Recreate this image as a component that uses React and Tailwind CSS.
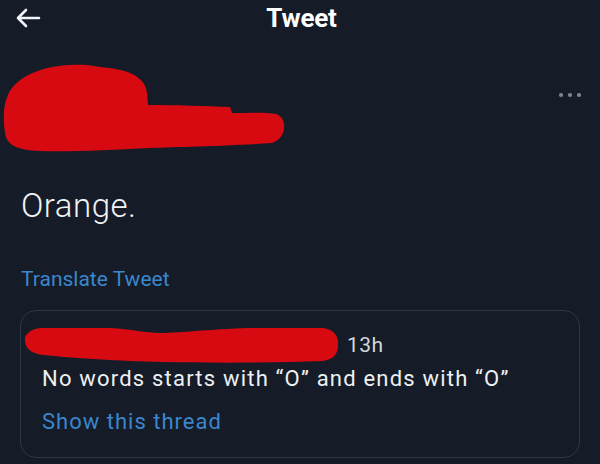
export default function App() {
  return (
    <div className="w-[600px] h-[464px] bg-[#151c28] overflow-hidden text-white" style={{ fontFamily: 'Roboto, "Liberation Sans", sans-serif' }}>
      <div className="relative h-[38px] flex items-start justify-center">
        <svg className="absolute left-[15px] top-[7px]" width="26" height="22" viewBox="0 0 26 22" fill="none" stroke="#f2f4f7" strokeWidth="2.6" strokeLinecap="round" strokeLinejoin="round">
          <path d="M24 11H3M11 3L3 11l8 8" />
        </svg>
        <span className="text-[26px] font-bold tracking-[-0.2px] leading-none mt-[5px] ml-[3px]">Tweet</span>
      </div>
      <div className="flex items-start justify-between h-[124px]">
        <svg width="290" height="100" viewBox="0 0 290 100" className="mt-[22px]">
          <path d="M100 7 C 125 9, 145 15, 147 33 L 148 45 C 175 45, 205 46, 230 47 L 232 53 C 250 53, 265 52, 276 54 C 288 58, 287 78, 272 83 C 230 86, 180 87, 150 88 C 110 90, 70 92, 40 91 C 15 90, 6 84, 5 72 C 3 60, 3 45, 8 35 C 15 18, 40 6, 70 5 C 85 4, 95 6, 100 7 Z" fill="#d70a12" />
        </svg>
        <svg width="26" height="6" viewBox="0 0 26 6" className="mt-[54px] mr-[17px]">
          <circle cx="4" cy="3" r="2.1" fill="#7d8691" />
          <circle cx="13" cy="3" r="2.1" fill="#7d8691" />
          <circle cx="22" cy="3" r="2.1" fill="#7d8691" />
        </svg>
      </div>
      <div className="px-[21px]">
        <div className="text-[33px] font-light leading-none tracking-[0.5px] text-[#f1f3f5] mt-[27px]">Orange.</div>
        <div className="text-[21px] leading-none text-[#3b86cc] mt-[47px]">Translate Tweet</div>
      </div>
      <div className="mx-[20px] mt-[20px] h-[148px] rounded-[16px] border border-[#2e3642] pt-[14px]">
        <div className="flex items-start">
          <svg width="320" height="40" viewBox="0 0 320 40">
            <path d="M4 12 C 8 5, 15 3, 22 3 L 89 3 C 110 4, 125 8, 139 8 C 160 8, 200 3, 239 3 L 302 3 C 314 5, 318 12, 317 20 C 317 28, 314 34, 302 36 C 250 38, 190 38, 140 37 C 100 36, 50 33, 22 30 C 10 28, 3 24, 4 12 Z" fill="#d70a12" />
          </svg>
          <span className="text-[21px] leading-none tracking-[0.5px] text-[#d3d7dc] ml-[6px] mt-[10px]">13h</span>
        </div>
        <div className="pl-[21px] text-[22px] leading-none tracking-[1.2px] text-[#eef0f2] mt-[3px]">No words starts with “O” and ends with “O”</div>
        <div className="pl-[21px] text-[22px] leading-none tracking-[1px] text-[#3b86cc] mt-[21px]">Show this thread</div>
      </div>
    </div>
  );
}
